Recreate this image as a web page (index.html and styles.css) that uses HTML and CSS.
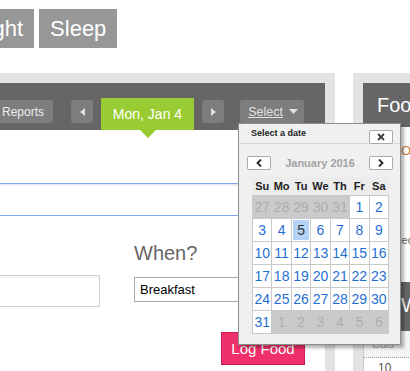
FILE: index.html
```html
<!DOCTYPE html>
<html>
<head>
<meta charset="utf-8">
<link rel="stylesheet" href="styles.css">
</head>
<body>
<nav class="tabs">
  <span class="tab">Weight</span>
  <span class="tab">Sleep</span>
</nav>
<div class="main">
  <section class="left">
    <div class="day-bar">
      <span class="btn reports">Reports</span>
      <span class="btn arrow prev"><svg width="5" height="8" viewBox="0 0 5 8"><path d="M5 0 L0 4 L5 8 Z" fill="#e0e0e0"/></svg></span>
      <span class="date">Mon, Jan 4</span>
      <span class="btn arrow next"><svg width="5" height="8" viewBox="0 0 5 8"><path d="M0 0 L5 4 L0 8 Z" fill="#e0e0e0"/></svg></span>
      <span class="btn select"><span class="select-text">Select</span><svg width="9" height="5" viewBox="0 0 9 5"><path d="M0 0 H9 L4.5 5 Z" fill="#e0e0e0"/></svg></span>
    </div>
    <div class="left-body">
      <div class="search"></div>
      <div class="form-row">
        <div class="field">
          <div class="lbl"></div>
          <div class="text-input"></div>
        </div>
        <div class="field">
          <div class="lbl">When?</div>
          <div class="select-box">Breakfast</div>
        </div>
      </div>
      <div class="actions"><span class="log">Log Food</span></div>
    </div>
  </section>
  <section class="right">
    <div class="r-head">Food Summary</div>
    <div class="r-link">Overview</div>
    <div class="r-note">consumed</div>
    <div class="r-head2">Water</div>
    <div class="tbl-head">Cals</div>
    <div class="tbl-row">10</div>
  </section>
</div>

<div class="calendar">
  <div class="cal-title">
    <span class="cal-caption">Select a date</span>
    <span class="cal-close"><svg width="8" height="8" viewBox="0 0 8 8"><path d="M1 1 L7 7 M7 1 L1 7" stroke="#3a3a3a" stroke-width="1.8"/></svg></span>
  </div>
  <div class="cal-nav">
    <span class="cal-btn"><svg width="6" height="8" viewBox="0 0 6 8"><path d="M5 0.5 L1.5 4 L5 7.5" stroke="#222" stroke-width="1.8" fill="none"/></svg></span>
    <span class="cal-month">January 2016</span>
    <span class="cal-btn"><svg width="6" height="8" viewBox="0 0 6 8"><path d="M1 0.5 L4.5 4 L1 7.5" stroke="#222" stroke-width="1.8" fill="none"/></svg></span>
  </div>
  <div class="cal-days">
    <span>Su</span><span>Mo</span><span>Tu</span><span>We</span><span>Th</span><span>Fr</span><span>Sa</span>
  </div>
  <div class="cal-grid">
    <span class="other">27</span><span class="other">28</span><span class="other">29</span><span class="other">30</span><span class="other">31</span><span>1</span><span>2</span>
    <span>3</span><span>4</span><span class="sel">5</span><span>6</span><span>7</span><span>8</span><span>9</span>
    <span>10</span><span>11</span><span>12</span><span>13</span><span>14</span><span>15</span><span>16</span>
    <span>17</span><span>18</span><span>19</span><span>20</span><span>21</span><span>22</span><span>23</span>
    <span>24</span><span>25</span><span>26</span><span>27</span><span>28</span><span>29</span><span>30</span>
    <span>31</span><span class="other">1</span><span class="other">2</span><span class="other">3</span><span class="other">4</span><span class="other">5</span><span class="other">6</span>
  </div>
</div>
</body>
</html>
```

FILE: styles.css
```css
html, body {
  margin: 0;
  padding: 0;
}
body {
  width: 410px;
  height: 371px;
  overflow: hidden;
  background: #fff;
  font-family: "Liberation Sans", Arial, sans-serif;
  position: relative;
}

/* top tabs */
.tabs {
  display: flex;
  gap: 5px;
  padding-top: 9px;
  margin-left: -56px;
}
.tab {
  background: #979797;
  color: #fff;
  font-size: 22px;
  line-height: 39px;
  height: 39px;
  padding: 0 11px;
}

/* main layout */
.main {
  display: flex;
  gap: 18px;
  margin-top: 25px;
  margin-left: -60px;
  align-items: flex-start;
  height: 298px;
  overflow: hidden;
}
.left {
  flex: 0 0 395px;
  box-sizing: border-box;
  border: 10px solid #e3e3e3;
  border-bottom: none;
  height: 298px;
}
.right {
  flex: 0 0 220px;
  box-sizing: border-box;
  border: 10px solid #e3e3e3;
  border-bottom: none;
  height: 298px;
  overflow: hidden;
}

/* day bar */
.day-bar {
  height: 47px;
  box-sizing: border-box;
  background: #666;
  display: flex;
  justify-content: flex-end;
  align-items: flex-start;
  padding: 15px 21px 0 0;
}
.btn {
  height: 23px;
  margin-top: 2px;
  background: #7d7d7d;
  border-radius: 3px;
  color: #eee;
  display: flex;
  align-items: center;
  justify-content: center;
  box-sizing: border-box;
}
.reports {
  font-size: 12px;
  padding: 0 9px 0 12px;
  margin-right: 18px;
}
.arrow {
  width: 22px;
}
.prev { margin-right: 8px; }
.next { margin-right: 16px; }
.date {
  position: relative;
  height: 32px;
  width: 93px;
  box-sizing: border-box;
  background: #99cc33;
  color: #fff;
  font-size: 14px;
  line-height: 32px;
  text-align: center;
  margin-right: 8px;
}
.date::after {
  content: "";
  position: absolute;
  top: 100%;
  left: 50%;
  margin-left: -8px;
  border-left: 8px solid transparent;
  border-right: 8px solid transparent;
  border-top: 8px solid #99cc33;
}
.select {
  width: 64px;
  gap: 6px;
  padding-left: 2px;
}
.select-text {
  font-size: 12.5px;
  color: #e2e2e2;
  text-decoration: underline;
}

/* left body */
.left-body {
  padding: 53px 10px 0 0;
}
.search {
  height: 33px;
  box-sizing: border-box;
  border: 1px solid #7ea6ec;
  border-top-color: #7ea6ec;
  box-shadow: inset 0 1px 0 #dfe8f8, inset 0 2px 0 #f2f2f2;
  background: #fff;
}
.form-row {
  display: grid;
  grid-template-columns: 150px 1fr;
  column-gap: 34px;
  margin-top: 25px;
}
.lbl {
  height: 24px;
  font-size: 20px;
  line-height: 24px;
  color: #666;
}
.text-input {
  margin-top: 10px;
  height: 32px;
  box-sizing: border-box;
  border: 1px solid #cfcfcf;
  box-shadow: inset 0 2px 2px rgba(0, 0, 0, 0.05);
}
.select-box {
  margin-top: 12px;
  height: 25px;
  box-sizing: border-box;
  border: 1px solid #a9a9a9;
  font-size: 13px;
  line-height: 23px;
  padding-left: 5px;
  color: #000;
}
.actions {
  display: flex;
  justify-content: flex-end;
  margin-top: 25px;
  padding-right: 10px;
}
.log {
  height: 33px;
  width: 84px;
  box-sizing: border-box;
  background: #f0306a;
  border: 1px solid #c81f52;
  color: #fff;
  font-size: 15px;
  line-height: 31px;
  text-align: center;
}

/* right panel */
.r-head {
  height: 44px;
  background: #666;
  color: #fff;
  font-size: 20px;
  line-height: 44px;
  padding-left: 14px;
  white-space: nowrap;
}
.r-link {
  margin-top: 16px;
  padding-left: 38px;
  font-size: 13px;
  line-height: 15px;
  color: #c8803a;
}
.r-note {
  margin-top: 76px;
  font-size: 11px;
  line-height: 13px;
  color: #666;
}
.r-head2 {
  margin-top: 35px;
  height: 49px;
  background: #666;
  color: #fff;
  font-size: 20px;
  line-height: 46px;
  padding-left: 38px;
}
.tbl-head {
  height: 27px;
  box-sizing: border-box;
  background: #f4f4f4;
  border-left: 1px solid #ccc;
  border-bottom: 1px dotted #999;
  font-size: 11px;
  line-height: 26px;
  color: #999;
  padding-left: 8px;
}
.tbl-row {
  border-left: 1px solid #ccc;
  font-size: 12px;
  line-height: 20px;
  color: #555;
  padding-left: 14px;
}

/* calendar popup */
.calendar {
  position: absolute;
  left: 238px;
  top: 123px;
  width: 163px;
  height: 222px;
  box-sizing: border-box;
  border: 1px solid #8d8d8d;
  background: #f0f0f0;
  box-shadow: 3px 3px 3px rgba(0, 0, 0, 0.3);
}
.cal-title {
  display: flex;
  justify-content: space-between;
  align-items: flex-start;
  height: 20px;
  box-sizing: border-box;
  border-bottom: 1px solid #d6d6d6;
  padding: 0 7px 0 12px;
}
.cal-caption {
  font-size: 9px;
  font-weight: bold;
  color: #222;
  line-height: 11px;
  padding-top: 4px;
}
.cal-close {
  margin-top: 6px;
  width: 24px;
  height: 14px;
  box-sizing: border-box;
  background: #fff;
  border: 1px solid #aaa;
  border-radius: 2px;
  display: flex;
  align-items: center;
  justify-content: center;
}
.cal-nav {
  display: flex;
  align-items: center;
  margin-top: 12px;
  padding: 0 7px 0 8px;
  height: 14px;
}
.cal-btn {
  width: 24px;
  height: 14px;
  box-sizing: border-box;
  background: #fff;
  border: 1px solid #aaa;
  border-radius: 2px;
  display: flex;
  align-items: center;
  justify-content: center;
}
.cal-month {
  flex: 1;
  text-align: center;
  font-size: 11px;
  font-weight: bold;
  color: #a2a2a2;
}
.cal-days {
  display: grid;
  grid-template-columns: repeat(7, 1fr);
  gap: 1px;
  width: 137px;
  box-sizing: border-box;
  padding: 0 1px;
  margin: 7px 0 0 13px;
  height: 18px;
  background: #ececec;
}
.cal-days span {
  text-align: center;
  font-size: 11px;
  font-weight: bold;
  line-height: 18px;
  color: #222;
}
.cal-grid {
  display: grid;
  grid-template-columns: repeat(7, 1fr);
  grid-auto-rows: 22px;
  gap: 1px;
  padding: 1px;
  width: 137px;
  box-sizing: border-box;
  margin-left: 13px;
  background: #cacaca;
}
.cal-grid span {
  background: #fff;
  text-align: center;
  font-size: 14px;
  line-height: 22px;
  color: #1f6fd3;
}
.cal-grid .other {
  background: #cacaca;
  color: #adadad;
}
.cal-grid .sel {
  background: #b5d3f7;
  box-shadow: inset 0 0 0 1px #fff;
  color: #333;
}
```
